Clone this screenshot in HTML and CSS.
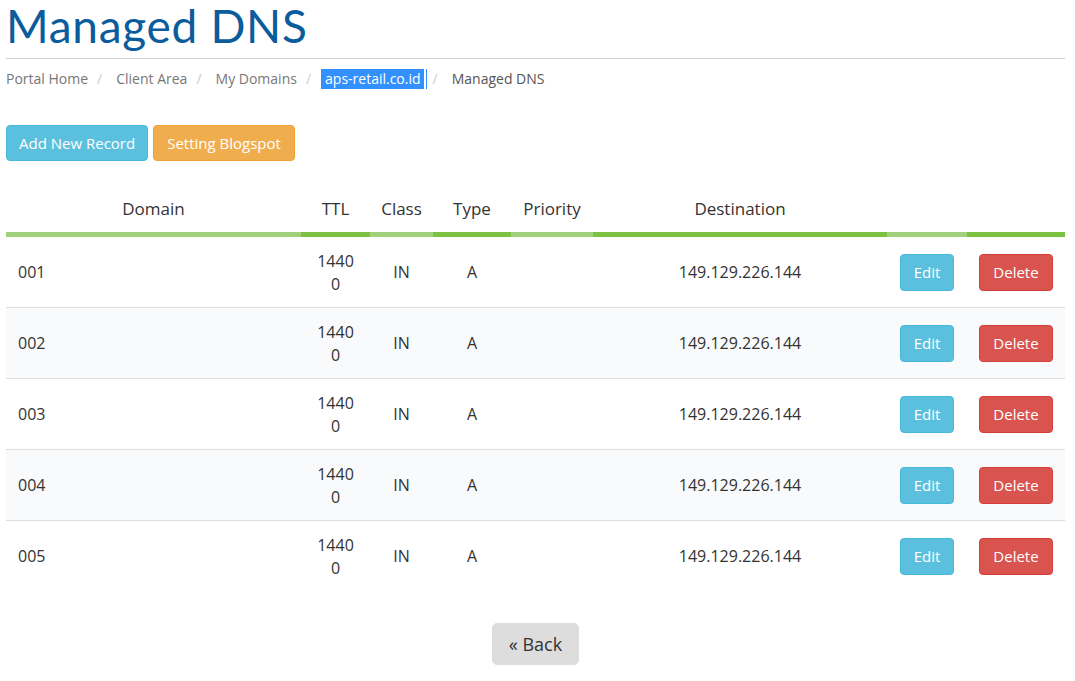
FILE: index.html
```html
<!DOCTYPE html>
<html>
<head>
<meta charset="utf-8">
<link rel="stylesheet" href="styles.css">
</head>
<body>
<div class="page">
  <h1 class="title">Managed DNS</h1>
  <ol class="crumbs">
    <li><a href="#">Portal Home</a></li>
    <li><span class="sep">/</span><a href="#">Client Area</a></li>
    <li><span class="sep">/</span><a href="#">My Domains</a></li>
    <li><span class="sep">/</span><a href="#" class="selected">aps-retail.co.id</a><span class="caret"></span></li>
    <li class="active"><span class="sep">/</span>Managed DNS</li>
  </ol>
  <div class="actions">
    <button class="btn btn-info">Add New Record</button>
    <button class="btn btn-warning">Setting Blogspot</button>
  </div>
  <table class="dns">
    <colgroup>
      <col class="c-domain"><col class="c-ttl"><col class="c-class"><col class="c-type"><col class="c-prio"><col class="c-dest"><col class="c-edit"><col class="c-del">
    </colgroup>
    <thead>
      <tr>
        <th class="light">Domain</th>
        <th class="dark">TTL</th>
        <th class="light">Class</th>
        <th class="dark">Type</th>
        <th class="light">Priority</th>
        <th class="dark">Destination</th>
        <th class="light"></th>
        <th class="dark"></th>
      </tr>
    </thead>
    <tbody>
      <tr>
        <td class="domain">001</td><td class="ttl">14400</td><td>IN</td><td>A</td><td></td><td>149.129.226.144</td>
        <td><button class="btn btn-info sm">Edit</button></td><td><button class="btn btn-danger sm">Delete</button></td>
      </tr>
      <tr>
        <td class="domain">002</td><td class="ttl">14400</td><td>IN</td><td>A</td><td></td><td>149.129.226.144</td>
        <td><button class="btn btn-info sm">Edit</button></td><td><button class="btn btn-danger sm">Delete</button></td>
      </tr>
      <tr>
        <td class="domain">003</td><td class="ttl">14400</td><td>IN</td><td>A</td><td></td><td>149.129.226.144</td>
        <td><button class="btn btn-info sm">Edit</button></td><td><button class="btn btn-danger sm">Delete</button></td>
      </tr>
      <tr>
        <td class="domain">004</td><td class="ttl">14400</td><td>IN</td><td>A</td><td></td><td>149.129.226.144</td>
        <td><button class="btn btn-info sm">Edit</button></td><td><button class="btn btn-danger sm">Delete</button></td>
      </tr>
      <tr>
        <td class="domain">005</td><td class="ttl">14400</td><td>IN</td><td>A</td><td></td><td>149.129.226.144</td>
        <td><button class="btn btn-info sm">Edit</button></td><td><button class="btn btn-danger sm">Delete</button></td>
      </tr>
    </tbody>
  </table>
  <div class="back-wrap">
    <button class="btn btn-back">« Back</button>
  </div>
</div>
</body>
</html>
```

FILE: styles.css
```css
html, body {
  margin: 0;
  padding: 0;
  background: #fff;
}
body {
  font-family: "Open Sans", "DejaVu Sans", sans-serif;
  color: #333;
}
.page {
  padding: 0 10px 0 6px;
}
.title {
  margin: 0;
  font-family: Lato, "Open Sans", sans-serif;
  font-weight: 400;
  font-size: 46px;
  line-height: 52px;
  letter-spacing: 0.7px;
  color: #0b5c9c;
  padding-bottom: 6px;
  border-bottom: 1px solid #cfcfcf;
}
.crumbs {
  list-style: none;
  margin: 10px 0 0;
  padding: 0;
  display: flex;
  font-size: 14px;
  line-height: 20px;
  color: #777;
}
.crumbs li {
  display: flex;
  align-items: center;
}
.crumbs a {
  color: #777;
  text-decoration: none;
}
.crumbs .sep {
  color: #ccc;
  margin: 0 14px 0 9px;
}
.crumbs .selected {
  background: #3390ff;
  color: #fff;
  padding: 0 3px 0 4px;
  margin-left: -4px;
}
.crumbs .caret {
  display: inline-block;
  width: 1px;
  height: 20px;
  background: #3390ff;
  margin-left: 2px;
  margin-right: -3px;
}
.crumbs .active {
  color: #555;
}
.actions {
  margin-top: 36px;
  display: flex;
  gap: 5px;
}
.btn {
  font-family: "Open Sans", "DejaVu Sans", sans-serif;
  font-size: 15px;
  line-height: 22px;
  padding: 6px 12px;
  border-radius: 4px;
  border: 1px solid transparent;
  color: #fff;
  cursor: pointer;
}
.btn-info {
  background: #5bc0de;
  border-color: #46b8da;
}
.btn-warning {
  padding: 6px 13px;
  background: #f0ad4e;
  border-color: #eea236;
}
.btn-danger {
  background: #d9534f;
  border-color: #d43f3a;
}
.btn.sm {
  line-height: 23px;
  padding: 6px 13px;
}
.dns {
  margin-top: 24px;
  width: 100%;
  table-layout: fixed;
  border-collapse: separate;
  border-spacing: 0;
}
.c-domain { width: 295px; }
.c-ttl { width: 69px; }
.c-class { width: 63px; }
.c-type { width: 78px; }
.c-prio { width: 82px; }
.c-dest { width: 294px; }
.c-edit { width: 80px; }
.c-del { width: 98px; }
.dns th {
  font-weight: 400;
  font-size: 17px;
  line-height: 24px;
  padding: 12px 0 11px;
  text-align: center;
  color: #333;
  border-bottom: 5px solid #a1d17a;
}
.dns th.dark {
  border-bottom-color: #7dc142;
}
.dns td {
  font-size: 16px;
  line-height: 23px;
  padding: 12px 0;
  text-align: center;
  vertical-align: middle;
  border-bottom: 1px solid #dddddd;
}
.dns tbody tr:last-child td {
  border-bottom: none;
}
.dns tbody tr:nth-child(even) td {
  background: #f8fafb;
}
.dns td.domain {
  text-align: left;
  padding-left: 12px;
}
.dns td.ttl {
  padding: 13px 15px 11px;
  word-break: break-all;
}
.back-wrap {
  display: flex;
  justify-content: center;
  margin-top: 32px;
}
.btn-back {
  background: #dddddd;
  border-color: #dddddd;
  color: #333;
  font-size: 18px;
  line-height: 24px;
  padding: 8px 16px;
  border-radius: 5px;
}
```
